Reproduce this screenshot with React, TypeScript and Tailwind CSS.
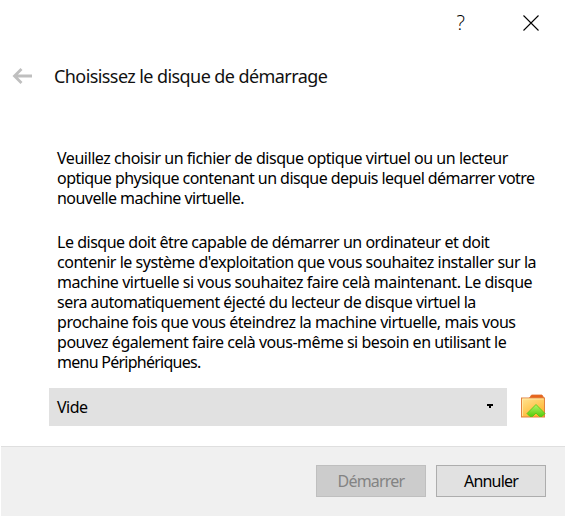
import React from "react";

type Line = { text: string; className: string };

const intro: Line[] = [
  { text: "Veuillez choisir un fichier de disque optique virtuel ou un lecteur", className: "tracking-[-0.46px]" },
  { text: "optique physique contenant un disque depuis lequel démarrer votre", className: "tracking-[-0.55px]" },
  { text: "nouvelle machine virtuelle.", className: "tracking-[-0.55px]" },
];

const details: Line[] = [
  { text: "Le disque doit être capable de démarrer un ordinateur et doit", className: "tracking-[-0.48px]" },
  { text: "contenir le système d'exploitation que vous souhaitez installer sur la", className: "tracking-[-0.46px]" },
  { text: "machine virtuelle si vous souhaitez faire celà maintenant. Le disque", className: "tracking-[-0.445px]" },
  { text: "sera automatiquement éjecté du lecteur de disque virtuel la", className: "tracking-[-0.5px]" },
  { text: "prochaine fois que vous éteindrez la machine virtuelle, mais vous", className: "tracking-[-0.455px]" },
  { text: "pouvez également faire celà vous-même si besoin en utilisant le", className: "tracking-[-0.465px]" },
  { text: "menu Périphériques.", className: "tracking-[-0.74px]" },
];

function Paragraph({ lines }: { lines: Line[] }) {
  return (
    <p className="whitespace-nowrap text-[16px] leading-[20px]">
      {lines.map((line) => (
        <span key={line.text} className={`block ${line.className}`}>
          {line.text}
        </span>
      ))}
    </p>
  );
}

function FolderIcon() {
  return (
    <svg width="26" height="26" viewBox="0 0 26 26">
      <defs>
        <linearGradient id="folder" x1="0" y1="0" x2="0.6" y2="1">
          <stop offset="0" stopColor="#ffe391" />
          <stop offset="1" stopColor="#ffb52f" />
        </linearGradient>
        <linearGradient id="chevron" x1="0" y1="0" x2="0" y2="1">
          <stop offset="0" stopColor="#b4f46a" />
          <stop offset="1" stopColor="#55cc0c" />
        </linearGradient>
      </defs>
      <path d="M9.500 5 11.500 2H22l2 3z" fill="#e8641b" stroke="#e0702f" strokeWidth="0.8" />
      <rect x="1.5" y="5" width="23" height="19" fill="url(#folder)" stroke="#e2813f" />
      <path d="M2.5 23V6h21" fill="none" stroke="#fff0b8" strokeWidth="0.7" />
      <path d="m16 11.500 9 9-3 3h-2.500L16 20l-3.500 3.500H10l-3-3z" fill="url(#chevron)" stroke="#4fc511" strokeWidth="0.8" />
    </svg>
  );
}

export default function App() {
  return (
    <div className="flex h-[516px] w-[565px] flex-col overflow-hidden bg-white font-['Noto_Sans','Open_Sans',sans-serif] text-black">
      <div className="flex h-[46px] items-center justify-end gap-[58px] pr-[26px]">
        <span className="font-['Open_Sans',sans-serif] text-[20px] leading-[20px] font-light">?</span>
        <svg width="16" height="16" viewBox="0 0 16 16" stroke="#000" strokeWidth="1.1">
          <path d="M.5.5l15 15M15.500.500l-15 15" />
        </svg>
      </div>
      <div className="flex h-[60px] items-center pl-3">
        <svg width="21" height="18" viewBox="0 0 21 18" fill="none" stroke="#bfbfbf" strokeWidth="2.8">
          <path d="M20 9H3M9.500 2 2.500 9l7 7" />
        </svg>
        <h1 className="ml-[21px] whitespace-nowrap text-[18px] leading-[24px] tracking-[-0.58px] text-[#111]">
          Choisissez le disque de démarrage
        </h1>
      </div>
      <div className="mt-[42px] flex flex-col gap-6 pl-[57px]">
        <Paragraph lines={intro} />
        <Paragraph lines={details} />
      </div>
      <div className="mt-4 flex h-[38px] shrink-0 items-center pl-[49px]">
        <div className="flex h-[38px] w-[458px] items-center justify-between bg-[#e1e1e1] pl-2 pr-[14px] text-[16px] tracking-[-0.55px]">
          <span>Vide</span>
          <svg width="6" height="4" viewBox="0 0 6 4" shapeRendering="crispEdges" className="-translate-y-px">
            <path d="M0 0h6v2H4v2H2V2H0z" />
          </svg>
        </div>
        <div className="ml-[13px] -translate-y-px">
          <FolderIcon />
        </div>
      </div>
      <div className="mt-auto ml-px flex h-[70px] shrink-0 justify-end gap-[10px] border-t border-[#dfdfdf] bg-[#f0f0f0] pt-[18px] pr-[19px] text-[16px] tracking-[-0.8px]">
        <button className="flex h-8 w-[110px] items-center justify-center border border-[#bfbfbf] bg-[#cccccc] text-[#838383]">
          Démarrer
        </button>
        <button className="flex h-8 w-[110px] items-center justify-center border border-[#adadad] bg-[#e1e1e1]">
          Annuler
        </button>
      </div>
    </div>
  );
}
